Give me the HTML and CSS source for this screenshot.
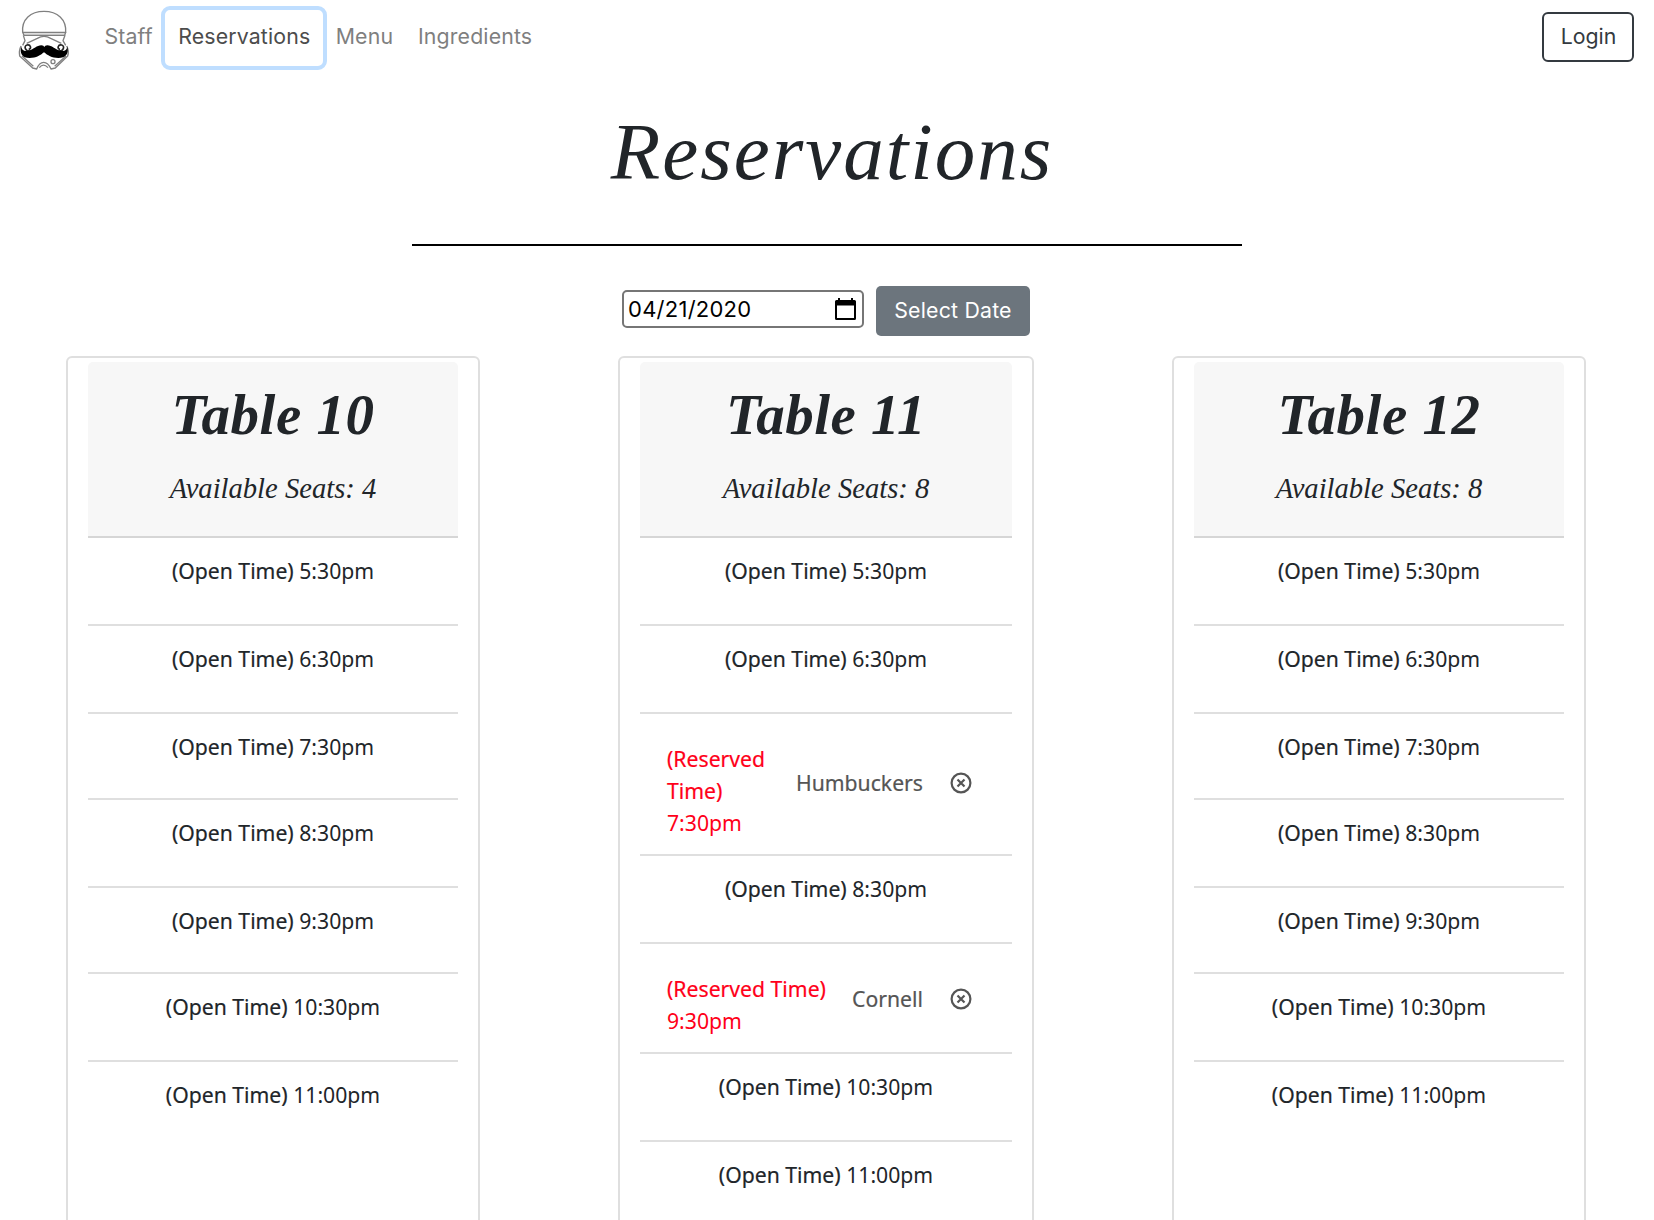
FILE: index.html
```html
<!DOCTYPE html>
<html lang="en">
<head>
<meta charset="utf-8">
<title>Reservations</title>
<link rel="stylesheet" href="styles.css">
</head>
<body>
<nav class="navbar">
  <a class="brand" href="#">
    <svg class="logo" viewBox="0 0 210 240" fill="none" stroke="#808080" stroke-width="4" stroke-linejoin="round">
      <path d="M38 98C34 58 62 34 102 34s68 24 65 64"/>
      <path d="M38 97h129l-3 9H42z" fill="#ddd"/>
      <path d="M40 106l5 16-7 14M165 106l-6 16 8 14"/>
      <path d="M50 130l32-15q20-12 40 0l32 15"/>
      <path d="M33 138q-7 14-4 30l39 36 12 3q8-20 21-20t22 20l13-3 37-36q5-16-3-30"/>
      <path d="M36 168l34 31M168 168l-34 31M88 203q12-15 26 0"/>
      <circle cx="129" cy="185" r="6"/>
      <path d="M60 153c-14 2-20-15-9-18 11-2 15 11 5 13M146 153c14 2 20-15 9-18-11-2-15 11-5 13" stroke="#222" stroke-width="5"/>
      <path d="M35 138c-2 12 9 18 21 14 16-4 24-16 38-16 5 0 8 3 9 5 1-2 4-5 9-5 14 0 22 12 38 16 12 4 23-2 21-14 8 22-4 36-26 36-20 0-32-8-43-17-11 9-23 17-43 17-22 0-32-14-24-36z" fill="#000" stroke="none"/>
    </svg>
  </a>
  <a class="nav-link" href="#">Staff</a>
  <a class="nav-link nav-link-active" href="#">Reservations</a>
  <a class="nav-link" href="#">Menu</a>
  <a class="nav-link" href="#">Ingredients</a>
  <button class="login">Login</button>
</nav>
<h1 class="title">Reservations</h1>
<hr class="rule">
<form class="picker">
  <div class="date"><span>04/21/2020</span>
    <svg class="calendar" viewBox="0 0 21 22"><path d="M3 0h2v2h11V0h2v2h1.500q1.500 0 1.500 1.500v17q0 1.500-1.500 1.500h-18Q0 22 0 20.500v-17Q0 2 1.500 2H3zM2 7.500V20h17V7.500z" fill="#000" fill-rule="evenodd"/></svg>
  </div>
  <button class="select" type="button">Select Date</button>
</form>
<main class="tables">
  <section class="card">
    <header class="card-header"><h2 class="name">Table 10</h2><p class="seats">Available Seats: 4</p></header>
    <div class="slot"><b class="state">(Open Time)</b> 5:30pm</div>
    <div class="slot"><b class="state">(Open Time)</b> 6:30pm</div>
    <div class="slot slot-short"><b class="state">(Open Time)</b> 7:30pm</div>
    <div class="slot"><b class="state">(Open Time)</b> 8:30pm</div>
    <div class="slot slot-short"><b class="state">(Open Time)</b> 9:30pm</div>
    <div class="slot"><b class="state">(Open Time)</b> 10:30pm</div>
    <div class="slot slot-last"><b class="state">(Open Time)</b> 11:00pm</div>
  </section>
  <section class="card card-wide">
    <header class="card-header"><h2 class="name">Table 11</h2><p class="seats">Available Seats: 8</p></header>
    <div class="slot"><b class="state">(Open Time)</b> 5:30pm</div>
    <div class="slot"><b class="state">(Open Time)</b> 6:30pm</div>
    <div class="slot reserved reserved-tall">
      <span class="held"><b class="state">(Reserved<br>Time)</b><br>7:30pm</span><span class="guest">Humbuckers</span>
      <svg class="cancel" viewBox="0 0 22 22"><circle cx="11" cy="11" r="9.400"/><path d="M7.500 7.500l7 7M14.500 7.500l-7 7"/></svg>
    </div>
    <div class="slot"><b class="state">(Open Time)</b> 8:30pm</div>
    <div class="slot reserved">
      <span class="held"><b class="state">(Reserved Time)</b><br>9:30pm</span><span class="guest">Cornell</span>
      <svg class="cancel" viewBox="0 0 22 22"><circle cx="11" cy="11" r="9.400"/><path d="M7.500 7.500l7 7M14.500 7.500l-7 7"/></svg>
    </div>
    <div class="slot"><b class="state">(Open Time)</b> 10:30pm</div>
    <div class="slot slot-last"><b class="state">(Open Time)</b> 11:00pm</div>
  </section>
  <section class="card">
    <header class="card-header"><h2 class="name">Table 12</h2><p class="seats">Available Seats: 8</p></header>
    <div class="slot"><b class="state">(Open Time)</b> 5:30pm</div>
    <div class="slot"><b class="state">(Open Time)</b> 6:30pm</div>
    <div class="slot slot-short"><b class="state">(Open Time)</b> 7:30pm</div>
    <div class="slot"><b class="state">(Open Time)</b> 8:30pm</div>
    <div class="slot slot-short"><b class="state">(Open Time)</b> 9:30pm</div>
    <div class="slot"><b class="state">(Open Time)</b> 10:30pm</div>
    <div class="slot slot-last"><b class="state">(Open Time)</b> 11:00pm</div>
  </section>
</main>
</body>
</html>
```
FILE: styles.css
```css
* { box-sizing: border-box; }
html, body { margin: 0; height: 1220px; overflow: hidden; }
body { background: #fff; color: #212529; font: 21.200px/32px "Noto Sans", sans-serif; }
.navbar { display: flex; align-items: flex-start; height: 76px; padding: 6px 20px 0 10px; font-family: Inter, sans-serif; }
.brand { width: 82px; margin-top: -6px; }
.logo { display: block; width: 70px; height: 80px; }
.nav-link { color: #7f7f7f; text-decoration: none; font-size: 21.300px; line-height: 60px; padding: 0 12.400px; height: 64px; letter-spacing: 0.150px; }
.nav-link-active { color: #4c4c4c; border: 4px solid #bfdeff; border-radius: 9px; line-height: 52px; padding: 0 13px; margin: 0 -4px; }
.login { margin: 6px 0 0 auto; width: 92px; height: 50px; padding: 0 0 2px 1px; border: 2px solid #343a40; border-radius: 6px; background: #fff; color: #343a40; font: 21.300px/44px Inter, sans-serif; }
.title { margin: 14px 0 0; height: 154px; padding-left: 10px; text-align: center; font: italic 400 81px/124px "Liberation Serif", serif; letter-spacing: 2px; }
.rule { width: 830px; height: 2px; border: 0; margin: 0 auto; background: #000; }
.picker { display: flex; align-items: flex-start; width: 408px; margin: 40px 0 0 622px; }
.date { display: flex; justify-content: space-between; align-items: center; width: 242px; height: 38px; margin-top: 4px; padding: 0 6px 0 4px; border: 2px solid #767676; border-radius: 5px; color: #000; font: 22px/35px Inter, sans-serif; letter-spacing: 0.250px; }
.calendar { width: 21px; height: 22px; }
.select { width: 154px; height: 50px; margin-left: 12px; padding: 0 0 2px; border: 0; border-radius: 5px; background: #6c757d; color: #fff; font: 21.300px/48px Inter, sans-serif; letter-spacing: 0.200px; }
.tables { display: flex; justify-content: space-between; margin: 20px 68px 0 66px; }
.card { width: 414px; height: 900px; padding: 4px 20px; border: 2px solid #dfdfdf; border-radius: 6px; }
.card-wide { width: 416px; }
.card-header { height: 176px; background: #f7f7f7; border-bottom: 2px solid #d6d6d6; border-radius: 5px 5px 0 0; text-align: center; font-family: "Liberation Serif", serif; font-style: italic; }
.name { margin: 0; padding-top: 21px; font-size: 57px; line-height: 64px; font-weight: 700; letter-spacing: 0.500px; }
.seats { margin: 24px 0 0; font-size: 28.600px; line-height: 36px; }
.slot { height: 88px; padding-top: 17px; border-bottom: 2px solid #dfdfdf; text-align: center; }
.slot-short { height: 86px; }
.slot-last { border: 0; }
.state { font-weight: 400; -webkit-text-stroke: 0.200px currentColor; }
.reserved { display: flex; align-items: center; height: 110px; padding: 20px 40px 6px 27px; text-align: left; }
.reserved-tall { height: 142px; }
.held { color: #ff0019; }
.guest { margin: 0 0 13px auto; color: #555; -webkit-text-stroke: 0.200px currentColor; }
.cancel { width: 22px; height: 22px; margin: 0 0 12px 27px; fill: none; stroke: #555; stroke-width: 2.200; }
.reserved-tall .guest { margin-bottom: 16px; }
.reserved-tall .cancel { margin-bottom: 17px; }
```
